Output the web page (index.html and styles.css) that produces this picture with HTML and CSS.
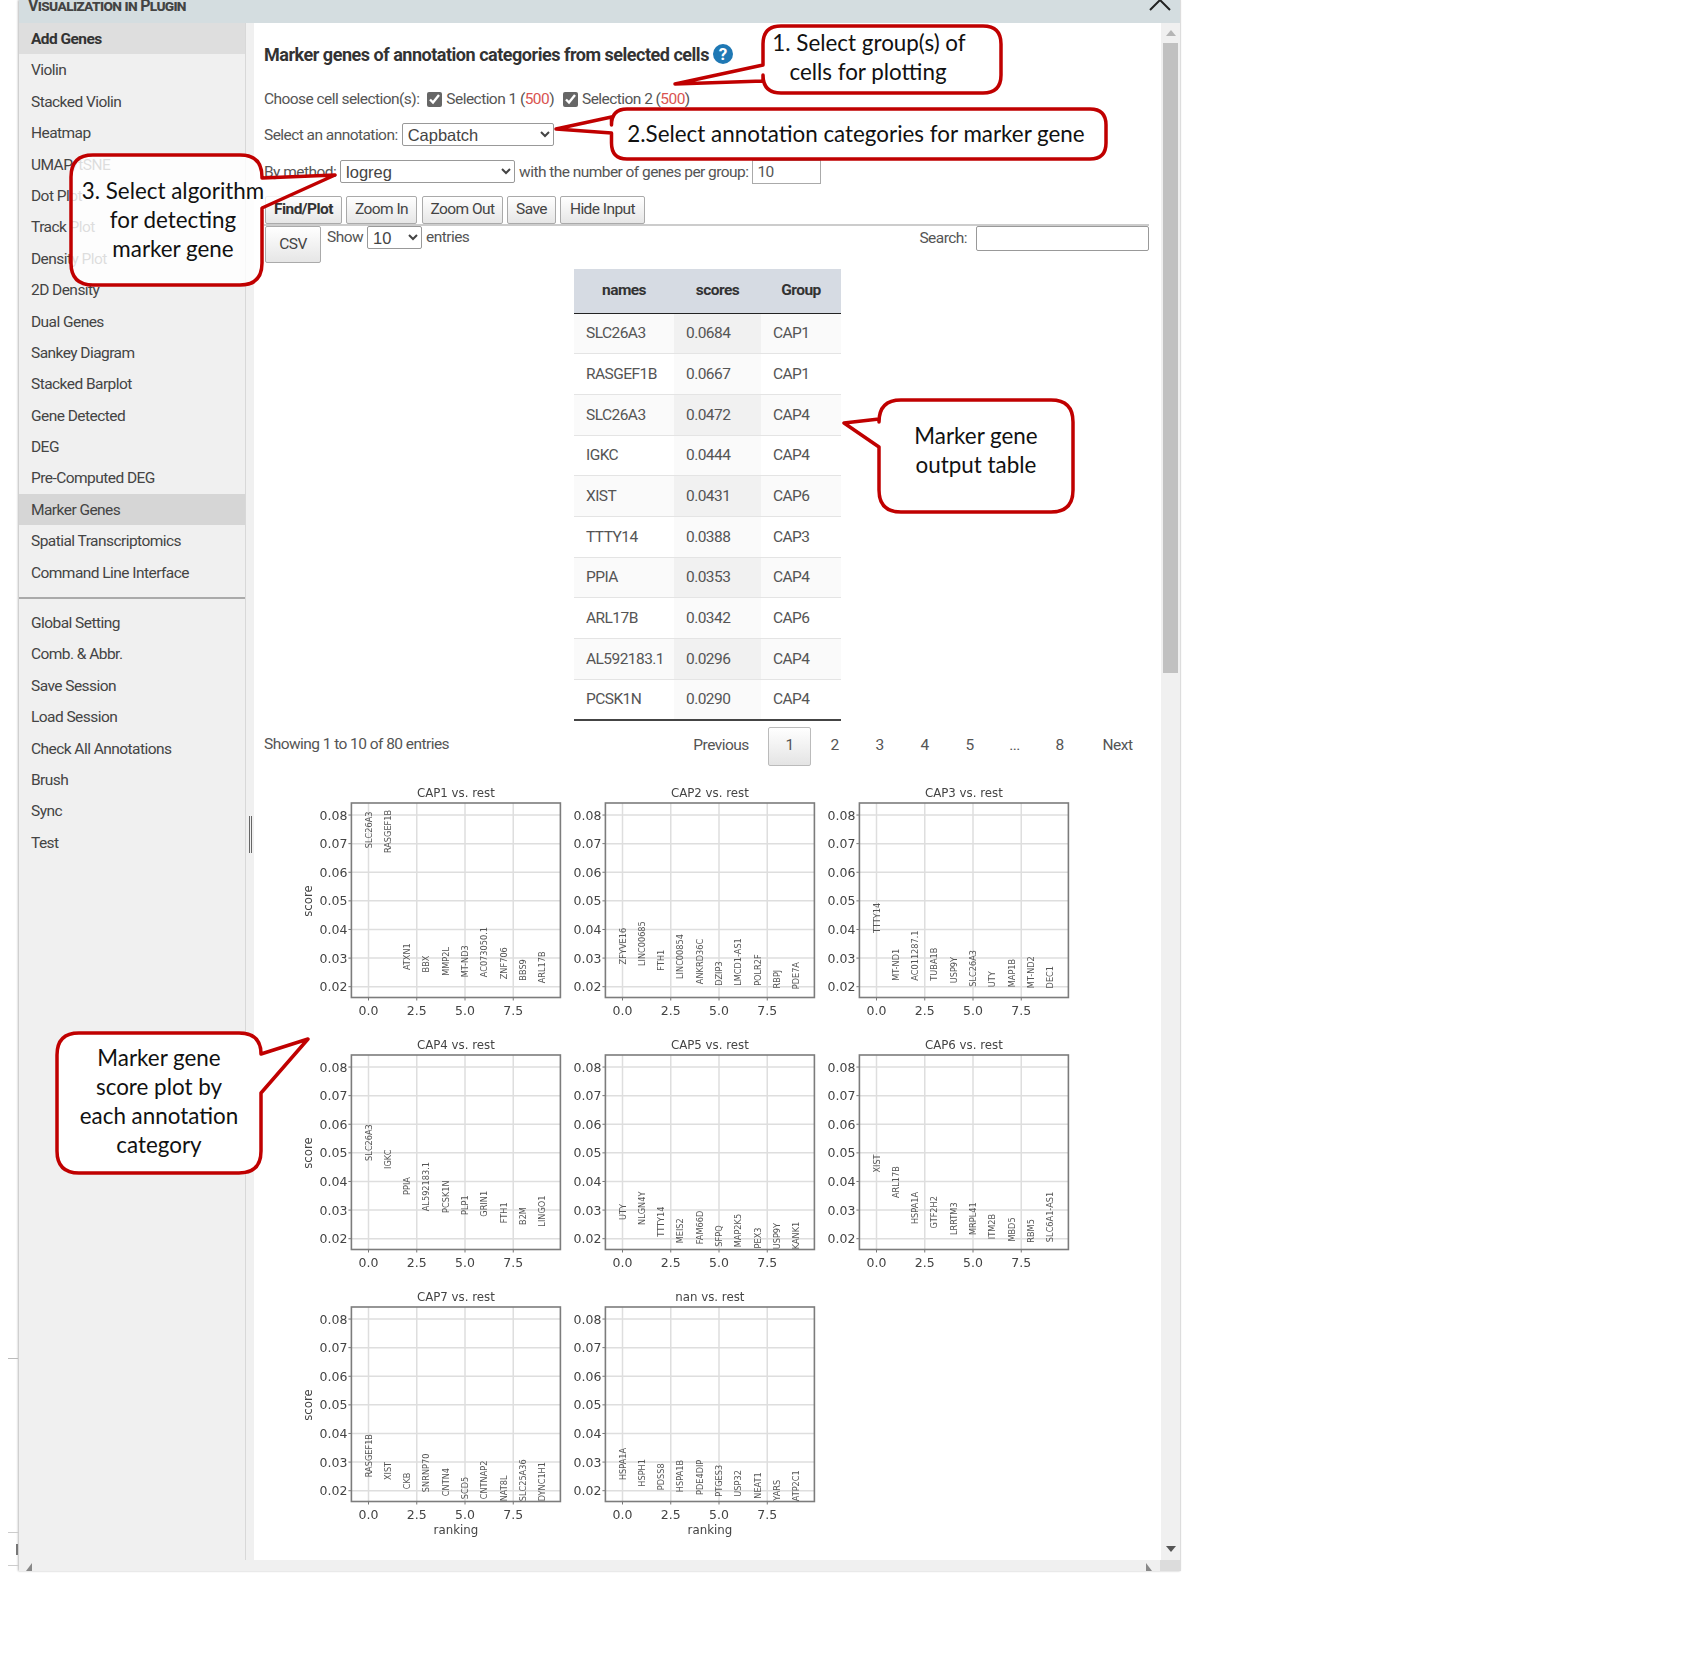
FILE: index.html
```html
<!DOCTYPE html>
<html lang="en">
<head>
  <meta charset="UTF-8" />
  <title>Visualization in Plugin</title>
  <link rel="stylesheet" href="styles.css">
</head>
<body>
  <div class="stray-line"></div>
  <div class="stray-box"><span class="stray-mark"></span></div>

  <div class="panel">
    <header class="panel-head">
      <span class="panel-title">Visualization in Plugin</span>
      <svg class="chevron" width="22" height="12" viewBox="0 0 22 12"><path d="M1 10 L11 0 L21 10" /></svg>
    </header>

    <div class="panel-body">
      <nav class="sidebar">
        <ul class="menu">
          <li class="active first">Add Genes</li>
          <li>Violin</li>
          <li>Stacked Violin</li>
          <li>Heatmap</li>
          <li>UMAP/tSNE</li>
          <li>Dot Plot</li>
          <li>Track Plot</li>
          <li>Density Plot</li>
          <li>2D Density</li>
          <li>Dual Genes</li>
          <li>Sankey Diagram</li>
          <li>Stacked Barplot</li>
          <li>Gene Detected</li>
          <li>DEG</li>
          <li>Pre-Computed DEG</li>
          <li class="active">Marker Genes</li>
          <li>Spatial Transcriptomics</li>
          <li>Command Line Interface</li>
        </ul>
        <ul class="menu menu-lower">
          <li>Global Setting</li>
          <li>Comb. &amp; Abbr.</li>
          <li>Save Session</li>
          <li>Load Session</li>
          <li>Check All Annotations</li>
          <li>Brush</li>
          <li>Sync</li>
          <li>Test</li>
        </ul>
      </nav>
      <div class="splitter"><span class="grip"></span></div>

      <main class="content">
        <h2 class="title">Marker genes of annotation categories from selected cells <span class="help">?</span></h2>

        <div class="row row-sel">
          <span>Choose cell selection(s):</span>
          <label class="check"><input type="checkbox" checked /><span>Selection 1 (<em>500</em>)</span></label>
          <label class="check"><input type="checkbox" checked /><span>Selection 2 (<em>500</em>)</span></label>
        </div>

        <div class="row row-annot">
          <span>Select an annotation:</span>
          <select class="sel sel-annot"><option>Capbatch</option></select>
        </div>

        <div class="row row-method">
          <span>By method:</span>
          <select class="sel sel-method"><option>logreg</option></select>
          <span>with the number of genes per group:</span>
          <input class="num" type="text" value="10" />
        </div>

        <div class="buttons">
          <button class="btn btn-main">Find/Plot</button>
          <button class="btn btn-in">Zoom In</button>
          <button class="btn btn-out">Zoom Out</button>
          <button class="btn btn-save">Save</button>
          <button class="btn btn-hide">Hide Input</button>
        </div>

        <div class="toolbar">
          <button class="btn btn-csv">CSV</button>
          <span class="show">Show</span>
          <select class="sel sel-len"><option>10</option></select>
          <span class="show">entries</span>
          <span class="search">Search:</span>
          <input class="search-box" type="text" />
        </div>

        <table class="genes">
          <thead>
            <tr><th>names</th><th>scores</th><th>Group</th></tr>
          </thead>
          <tbody>
            <tr><td>SLC26A3</td><td>0.0684</td><td>CAP1</td></tr>
            <tr><td>RASGEF1B</td><td>0.0667</td><td>CAP1</td></tr>
            <tr><td>SLC26A3</td><td>0.0472</td><td>CAP4</td></tr>
            <tr><td>IGKC</td><td>0.0444</td><td>CAP4</td></tr>
            <tr><td>XIST</td><td>0.0431</td><td>CAP6</td></tr>
            <tr><td>TTTY14</td><td>0.0388</td><td>CAP3</td></tr>
            <tr><td>PPIA</td><td>0.0353</td><td>CAP4</td></tr>
            <tr><td>ARL17B</td><td>0.0342</td><td>CAP6</td></tr>
            <tr><td>AL592183.1</td><td>0.0296</td><td>CAP4</td></tr>
            <tr><td>PCSK1N</td><td>0.0290</td><td>CAP4</td></tr>
          </tbody>
        </table>

        <div class="table-foot">
          <span class="info">Showing 1 to 10 of 80 entries</span>
          <div class="pager">
            <a class="prev">Previous</a>
            <a class="current">1</a>
            <a>2</a>
            <a>3</a>
            <a>4</a>
            <a>5</a>
            <a>...</a>
            <a>8</a>
            <a class="next">Next</a>
          </div>
        </div>

        <div id="plots" class="plots"></div>
      </main>

      <div class="vscroll">
        <svg class="arrow-up" width="10" height="6" viewBox="0 0 10 6"><path d="M5 0 L10 6 L0 6 Z" /></svg>
        <div class="thumb"></div>
        <svg class="arrow-down" width="10" height="6" viewBox="0 0 10 6"><path d="M0 0 L10 0 L5 6 Z" /></svg>
      </div>
    </div>

    <div class="hscroll">
      <svg class="arrow-left" width="6" height="8" viewBox="0 0 6 8"><path d="M6 0 L6 8 L0 8 Z" /></svg>
      <svg class="arrow-right" width="6" height="8" viewBox="0 0 6 8"><path d="M0 0 L6 8 L0 8 Z" /></svg>
      <div class="corner"></div>
    </div>
  </div>

  <!-- red callouts drawn over the page -->
  <svg class="callouts" width="1696" height="1656" viewBox="0 0 1696 1656">
    <path d="M763 65 L763 44 Q763 26 781 26 L983 26 Q1001 26 1001 44 L1001 75 Q1001 93 983 93 L781 93 Q763 93 763 75 L763 81 L675 84 Z" />
    <text x="869" y="51">1. Select group(s) of</text>
    <text x="868" y="80">cells for plotting</text>

    <path d="M611.5 117 L611.5 125 Q611.5 109 627 109 L1090 109 Q1106 109 1106 125 L1106 143 Q1106 159 1090 159 L627 159 Q611.5 159 611.5 143 L611.5 133 L556 129 Z" />
    <text x="856" y="142">2.Select annotation categories for marker gene</text>

    <path class="see-through" d="M262 178 L262 177 Q262 155 240 155 L93 155 Q71 155 71 177 L71 263 Q71 285 93 285 L240 285 Q262 285 262 263 L262 208 L335 175 Z" />
    <text x="173" y="199">3. Select algorithm</text>
    <text x="173" y="228">for detecting</text>
    <text x="173" y="257">marker gene</text>

    <path d="M879 419 L879 422 Q879 400 901 400 L1051 400 Q1073 400 1073 422 L1073 490 Q1073 512 1051 512 L901 512 Q879 512 879 490 L879 447 L844 423 Z" />
    <text x="976" y="444">Marker gene</text>
    <text x="976" y="473">output table</text>

    <path d="M261 1054 Q261 1033 239 1033 L79 1033 Q57 1033 57 1055 L57 1151 Q57 1173 79 1173 L239 1173 Q261 1173 261 1151 L261 1093 L308 1039 Z" />
    <text x="159" y="1066">Marker gene</text>
    <text x="159" y="1095">score plot by</text>
    <text x="159" y="1124">each annotation</text>
    <text x="159" y="1153">category</text>
  </svg>

  <script src="plots.js"></script>
</body>
</html>
```

FILE: styles.css
```css
body {
  margin: 0;
  height: 1656px;
  position: relative;
  background: #fff;
  font-family: Roboto, Arial, sans-serif;
  font-size: 15.5px;
  letter-spacing: -0.55px;
  color: #555;
  overflow: hidden;
}
.stray-line {
  position: absolute;
  left: 8px;
  top: 1358px;
  width: 10px;
  height: 1px;
  background: #bbb;
}
.stray-box {
  position: absolute;
  left: 8px;
  top: 1532px;
  width: 11px;
  height: 34px;
  box-sizing: border-box;
  border-top: 1px solid #ccc;
  border-bottom: 1px solid #ccc;
}
.stray-mark {
  position: absolute;
  right: 1px;
  top: 11px;
  width: 2px;
  height: 11px;
  background: #777;
}

.panel {
  margin-left: 19px;
  width: 1162px;
  height: 1571px;
  display: flex;
  flex-direction: column;
  box-shadow: -1px 0 2px #bbb;
  border-right: 1px solid #ddd;
  box-sizing: border-box;
}
.panel-head {
  height: 23px;
  flex: none;
  background: #d4dde0;
  position: relative;
  overflow: hidden;
  padding-left: 9px;
}
.panel-title {
  font-variant: small-caps;
  font-weight: bold;
  font-size: 16px;
  line-height: 12px;
  display: block;
  color: #444;
  letter-spacing: -0.7px;
}
.chevron {
  position: absolute;
  right: 9px;
  top: 0;
}
.chevron path {
  fill: none;
  stroke: #222;
  stroke-width: 2;
}
.panel-body {
  flex: 1;
  display: flex;
  min-height: 0;
}

.sidebar {
  width: 226px;
  flex: none;
  background: #f0f0f0;
  border-right: 1px solid #d8d8d8;
  color: #444;
}
.menu {
  list-style: none;
  margin: 0;
  padding: 0;
}
.menu li {
  height: 31.4px;
  line-height: 33px;
  padding-left: 12px;
}
.menu .active {
  background: #d6d6d6;
}
.menu .first {
  background: #dedede;
  font-weight: bold;
  color: #333;
}
.menu-lower {
  margin-top: 9px;
  padding-top: 8px;
  border-top: 2px solid #aaa;
}
.splitter {
  width: 8px;
  flex: none;
  background: #f0f0f0;
  position: relative;
}
.grip {
  position: absolute;
  left: 3px;
  top: 793px;
  width: 1px;
  height: 37px;
  border-left: 1px solid #666;
  border-right: 1px solid #666;
}

.content {
  flex: 1;
  min-width: 0;
  padding: 20px 12px 0 10px;
  background: #fff;
}
.title {
  margin: 0 0 -1px;
  height: 24px;
  font-size: 18px;
  line-height: 24px;
  font-weight: bold;
  color: #333;
  letter-spacing: -0.48px;
}
.help {
  display: inline-block;
  width: 20px;
  height: 20px;
  margin-left: 0;
  border-radius: 50%;
  background: #1f78b4;
  color: #fff;
  text-align: center;
  font-size: 17px;
  line-height: 20px;
  letter-spacing: 0;
  vertical-align: 1px;
}
.row {
  display: flex;
  align-items: center;
}
.row-sel {
  margin-top: 22px;
  height: 22px;
}
.row-annot {
  margin-top: 13px;
  height: 23px;
}
.row-method {
  margin-top: 13px;
  height: 25px;
}
.check {
  display: flex;
  align-items: center;
  gap: 4px;
}
.check input {
  margin: 0;
  width: 15px;
  height: 15px;
  accent-color: #666;
}
.check em {
  font-style: normal;
  color: #d9534f;
}
.row-sel .check:nth-child(2) {
  margin-left: 8px;
}
.row-sel .check:nth-child(3) {
  margin-left: 9px;
}
.sel {
  font-family: "Liberation Sans", Arial, sans-serif;
  font-size: 16.5px;
  letter-spacing: 0;
  color: #444;
  background: #fff;
  border: 1px solid #999;
  border-radius: 2px;
  height: 23px;
  padding: 0 0 0 1px;
  box-sizing: border-box;
}
.sel-annot {
  width: 152px;
  margin-left: 4px;
}
.sel-method {
  width: 175px;
  margin-left: 4px;
  margin-right: 4px;
}
.sel-len {
  width: 55px;
  margin: 0 4px;
}
.num {
  width: 69px;
  height: 24px;
  margin-left: 4px;
  padding: 0 4px;
  box-sizing: border-box;
  border: 1px solid #aaa;
  font-family: Roboto, Arial, sans-serif;
  font-size: 15.5px;
  color: #555;
  letter-spacing: -0.55px;
}

.buttons {
  margin-top: 12px;
  height: 30px;
  box-sizing: border-box;
  display: flex;
  border-bottom: 2px solid #ccc;
}
.btn {
  height: 28px;
  box-sizing: border-box;
  padding: 0 0 2px;
  border: 1px solid #aaa;
  border-radius: 2px;
  background: linear-gradient(#fff, #e6e6e6);
  font-family: Roboto, Arial, sans-serif;
  font-size: 15.5px;
  letter-spacing: -0.55px;
  color: #444;
}
.btn-main {
  width: 77px;
  margin-left: 1px;
  font-weight: bold;
  color: #333;
}
.btn-in {
  width: 71px;
  margin-left: 4px;
}
.btn-out {
  width: 81px;
  margin-left: 5px;
}
.btn-save {
  width: 49px;
  margin-left: 4px;
}
.btn-hide {
  width: 85px;
  margin-left: 4px;
}

.toolbar {
  display: flex;
  align-items: flex-start;
  height: 43px;
}
.btn-csv {
  width: 56px;
  height: 37px;
  margin-left: 1px;
  margin-right: 6px;
}
.show {
  line-height: 22px;
}
.search {
  margin-left: auto;
  margin-right: 9px;
  line-height: 25px;
}
.search-box {
  width: 173px;
  height: 25px;
  box-sizing: border-box;
  border: 1px solid #999;
  border-radius: 2px;
}

.genes {
  margin-left: 310px;
  width: 267px;
  border-collapse: collapse;
  table-layout: fixed;
  border-bottom: 2px solid #444;
}
.genes th {
  height: 44px;
  padding: 0 0 2px;
  box-sizing: border-box;
  background: #d6dbe3;
  border-bottom: 1px solid #222;
  color: #333;
  font-weight: bold;
}
.genes th:nth-child(1) {
  width: 100px;
}
.genes th:nth-child(2) {
  width: 87px;
}
.genes td {
  height: 40.7px;
  padding: 0 0 0 12px;
  box-sizing: border-box;
  border-top: 1px solid #e4e4e4;
  background: #fff;
}
.genes tbody tr:first-child td {
  border-top: 0;
}
.genes tbody tr:nth-child(odd) td {
  background: #fafafa;
}
.genes td:nth-child(2),
.genes tbody tr:nth-child(even) td:nth-child(2) {
  background: #fafafa;
}
.genes tbody tr:nth-child(odd) td:nth-child(2) {
  background: #f1f1f1;
}

.table-foot {
  margin-top: 6px;
  height: 39px;
  display: flex;
  justify-content: space-between;
  align-items: center;
}
.info {
  padding-bottom: 4px;
}
.pager {
  display: flex;
  align-items: center;
  margin-right: -4px;
  height: 39px;
}
.pager a {
  width: 45px;
  text-align: center;
  padding-bottom: 2px;
}
.pager .prev {
  width: 92px;
}
.pager .next {
  width: 71px;
}
.pager .current {
  width: 43px;
  margin: 0 1px;
  height: 39px;
  padding: 0;
  line-height: 35px;
  box-sizing: border-box;
  border: 1px solid #bbb;
  border-radius: 2px;
  background: linear-gradient(#fff, #e4e4e4);
}

.plots {
  margin: 14px 0 0 33px;
  display: grid;
  grid-template-columns: repeat(3, 254px);
  grid-auto-rows: 252px;
}
.plot {
  display: block;
  overflow: visible;
  filter: blur(0.4px);
}
.plot .grid {
  stroke: #dedede;
  stroke-width: 1.5;
}
.plot .frame {
  fill: none;
  stroke: #7c7c7c;
  stroke-width: 1.6;
}
.plot .tick {
  stroke: #777;
  stroke-width: 1;
}
.plot text {
  font-family: "DejaVu Sans", sans-serif;
  letter-spacing: 0;
  fill: #444;
}
.plot .plot-title {
  font-size: 11.8px;
  text-anchor: middle;
}
.plot .ylab {
  font-size: 12.5px;
  text-anchor: end;
}
.plot .xlab {
  font-size: 12.5px;
  text-anchor: middle;
}
.plot .axis-name {
  font-size: 11.8px;
  text-anchor: middle;
}
.plot .gene {
  font-size: 8.2px;
  fill: #555;
}

.vscroll {
  width: 19px;
  flex: none;
  background: #f0f0f0;
  position: relative;
}
.thumb {
  position: absolute;
  left: 2px;
  right: 2px;
  top: 20px;
  height: 630px;
  background: #c1c1c1;
}
.arrow-up {
  position: absolute;
  left: 5px;
  top: 7px;
}
.arrow-up path {
  fill: #b5b5b5;
}
.arrow-down {
  position: absolute;
  left: 5px;
  top: 1523px;
}
.arrow-down path {
  fill: #555;
}
.hscroll {
  height: 11px;
  flex: none;
  background: #f0f0f0;
  position: relative;
}
.arrow-left {
  position: absolute;
  left: 7px;
  top: 3px;
}
.arrow-right {
  position: absolute;
  right: 28px;
  top: 3px;
}
.arrow-left path,
.arrow-right path {
  fill: #888;
}
.corner {
  position: absolute;
  right: 0;
  top: 0;
  width: 20px;
  height: 11px;
  background: #dcdcdc;
}

.callouts {
  position: absolute;
  left: 0;
  top: 0;
}
.callouts path {
  fill: #fff;
  stroke: #c00000;
  stroke-width: 3.5;
  stroke-linejoin: round;
}
.callouts path.see-through {
  fill-opacity: 0.82;
}
.callouts text {
  font-family: Lato, "Open Sans", sans-serif;
  font-size: 22.4px;
  letter-spacing: 0;
  fill: #111;
  text-anchor: middle;
}
```

FILE: plots.js
```js
const plotData = [
  { name: 'CAP1', genes: [['SLC26A3', .0684], ['RASGEF1B', .0667], ['ATXN1', .0258], ['BBX', .025], ['MMP2L', .0238], ['MT-ND3', .0233], ['AC073050.1', .0233], ['ZNF706', .0226], ['BBS9', .0221], ['ARL17B', .0212]] },
  { name: 'CAP2', genes: [['ZFYVE16', .0278], ['LINC00685', .0272], ['FTH1', .0256], ['LINC00854', .0227], ['ANKRD36C', .0209], ['DZIP3', .0203], ['LMCD1-AS1', .0203], ['POLR2F', .0203], ['RBPJ', .0194], ['PDE7A', .0191]] },
  { name: 'CAP3', genes: [['TTTY14', .0388], ['MT-ND1', .0221], ['AC011287.1', .0221], ['TUBA1B', .0221], ['USP9Y', .0212], ['SLC26A3', .02], ['UTY', .0198], ['MAP1B', .0198], ['MT-ND2', .0195], ['DEC1', .0194]] },
  { name: 'CAP4', genes: [['SLC26A3', .0472], ['IGKC', .0444], ['PPIA', .0353], ['AL592183.1', .0296], ['PCSK1N', .029], ['PLP1', .0283], ['GRIN1', .0277], ['FTH1', .0254], ['B2M', .0248], ['LINGO1', .0242]] },
  { name: 'CAP5', genes: [['UTY', .0265], ['NLGN4Y', .0248], ['TTTY14', .0207], ['MEIS2', .0184], ['FAM66D', .0181], ['SFPQ', .0172], ['MAP2K5', .017], ['PEX3', .0166], ['USP9Y', .0163], ['KANK1', .0163]] },
  { name: 'CAP6', genes: [['XIST', .0431], ['ARL17B', .0342], ['HSPA1A', .0251], ['GTF2H2', .0236], ['LRRTM3', .0213], ['MRPL41', .0213], ['ITM2B', .0198], ['MBD5', .019], ['RBM5', .0186], ['SLC6A1-AS1', .0188]] },
  { name: 'CAP7', genes: [['RASGEF1B', .0247], ['XIST', .0237], ['CKB', .0205], ['SNRNP70', .0195], ['CNTN4', .0181], ['SCD5', .017], ['CNTNAP2', .017], ['NAT8L', .0163], ['SLC25A36', .0163], ['DYNC1H1', .0163]] },
  { name: 'nan', genes: [['HSPA1A', .0237], ['HSPH1', .0214], ['PDSS8', .0202], ['HSPA1B', .0195], ['PDE4DIP', .0185], ['PTGES3', .0179], ['USP32', .0179], ['NEAT1', .0172], ['YARS', .0165], ['ATP2C1', .0163]] }
];

// box of one plot inside its 254x252 cell
const box = { x: 54.4, y: 23, w: 209, h: 194.5 };
const xPos = r => box.x + 17.1 + r * 19.3;
const yPos = v => box.y + 183.7 - (v - 0.02) * 2861;

function plotSvg(plot, i) {
  let s = '';
  [0.02, 0.03, 0.04, 0.05, 0.06, 0.07, 0.08].forEach(v => {
    const y = yPos(v);
    s += `<line class="grid" x1="${box.x}" x2="${box.x + box.w}" y1="${y}" y2="${y}" />`;
    s += `<line class="tick" x1="${box.x - 3}" x2="${box.x}" y1="${y}" y2="${y}" />`;
    s += `<text class="ylab" x="${box.x - 4}" y="${y + 4.5}">${v.toFixed(2)}</text>`;
  });
  [0, 2.5, 5, 7.5].forEach(r => {
    const x = xPos(r);
    s += `<line class="grid" x1="${x}" x2="${x}" y1="${box.y}" y2="${box.y + box.h}" />`;
    s += `<line class="tick" x1="${x}" x2="${x}" y1="${box.y + box.h}" y2="${box.y + box.h + 3}" />`;
    s += `<text class="xlab" x="${x}" y="${box.y + box.h + 17.5}">${r.toFixed(1)}</text>`;
  });
  s += `<rect class="frame" x="${box.x}" y="${box.y}" width="${box.w}" height="${box.h}" />`;
  s += `<text class="plot-title" x="${box.x + box.w / 2}" y="17">${plot.name} vs. rest</text>`;
  plot.genes.forEach((g, r) => {
    const x = xPos(r) + 3;
    const y = Math.min(yPos(g[1]), box.y + box.h);
    s += `<text class="gene" transform="translate(${x} ${y}) rotate(-90)">${g[0]}</text>`;
  });
  if (i % 3 === 0) {
    s += `<text class="axis-name" transform="translate(15 121) rotate(-90)">score</text>`;
  }
  if (i >= 6) {
    s += `<text class="axis-name" x="${box.x + box.w / 2}" y="250">ranking</text>`;
  }
  return `<svg class="plot" width="254" height="252" viewBox="0 0 254 252">${s}</svg>`;
}

document.getElementById('plots').innerHTML = plotData.map(plotSvg).join('');
```
